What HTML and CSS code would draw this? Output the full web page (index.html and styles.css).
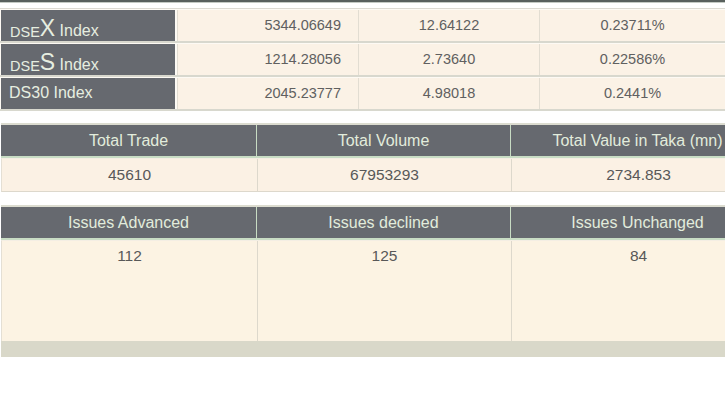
FILE: index.html
```html
<!DOCTYPE html>
<html>
<head>
<meta charset="utf-8">
<link rel="stylesheet" href="styles.css">
</head>
<body>
<div class="page">
  <div class="topbar"></div>
  <div class="idx">
    <div class="idx-row">
      <div class="idx-label"><span class="sm">DSE</span><span class="big">X</span> Index</div>
      <div class="idx-val right">5344.06649</div>
      <div class="idx-val">12.64122</div>
      <div class="idx-val">0.23711%</div>
    </div>
    <div class="idx-row">
      <div class="idx-label"><span class="sm">DSE</span><span class="big">S</span> Index</div>
      <div class="idx-val right">1214.28056</div>
      <div class="idx-val">2.73640</div>
      <div class="idx-val">0.22586%</div>
    </div>
    <div class="idx-row">
      <div class="idx-label plain">DS30 Index</div>
      <div class="idx-val right">2045.23777</div>
      <div class="idx-val">4.98018</div>
      <div class="idx-val">0.2441%</div>
    </div>
  </div>

  <div class="stat">
    <div class="stat-head">
      <div class="th">Total Trade</div>
      <div class="th">Total Volume</div>
      <div class="th">Total Value in Taka (mn)</div>
    </div>
    <div class="stat-body">
      <div class="td">45610</div>
      <div class="td">67953293</div>
      <div class="td">2734.853</div>
    </div>
  </div>

  <div class="stat issues">
    <div class="stat-head">
      <div class="th">Issues Advanced</div>
      <div class="th">Issues declined</div>
      <div class="th">Issues Unchanged</div>
    </div>
    <div class="stat-body tall">
      <div class="td">112</div>
      <div class="td">125</div>
      <div class="td">84</div>
    </div>
    <div class="stat-foot"></div>
  </div>
</div>
</body>
</html>
```

FILE: styles.css
```css
html, body {
  margin: 0;
  padding: 0;
  background: #ffffff;
  overflow: hidden;
}
.page {
  width: 725px;
  overflow: hidden;
  font-family: "Liberation Sans", Arial, sans-serif;
}
.topbar {
  height: 2px;
  background: #58605d;
  border-bottom: 1px solid #c4cac4;
  margin-bottom: 5px;
}
.idx {
  width: 725px;
  border-top: 1px solid #dcdad2;
}
.idx-row {
  display: grid;
  grid-template-columns: 176px 181px 181px 1fr;
  padding: 1px 0 0 1px;
  border-bottom: 2px solid #d8d8ce;
  background: #fdfaf4;
}
.idx-label {
  background: #66696f;
  color: #e6eee0;
  height: 31px;
  display: flex;
  align-items: flex-end;
  padding: 0 0 2px 9px;
  box-sizing: border-box;
  font-size: 16px;
  line-height: 1;
  white-space: pre;
  margin-right: 2px;
}
.idx-label .sm {
  font-size: 14.5px;
  line-height: 1;
}
.idx-label .big {
  font-size: 23px;
  line-height: 1;
  margin-bottom: -1px;
}
.idx-label.plain {
  align-items: center;
  padding: 0 0 1px 8px;
}
.idx-val {
  background: #fbf2e6;
  border-left: 1px solid #e2ddd2;
  color: #606060;
  font-size: 14.5px;
  display: flex;
  align-items: center;
  justify-content: center;
  padding-bottom: 1px;
  box-sizing: border-box;
}
.idx-val.right {
  justify-content: flex-end;
  padding-right: 17px;
}
.stat {
  width: 764px;
  margin-top: 12px;
  margin-left: 1px;
}
.issues {
  margin-top: 13px;
}
.stat-head {
  display: grid;
  grid-template-columns: 255px 254px 254px;
  background: #66696f;
  border-top: 2px solid #dcdcd0;
  border-bottom: 2px solid #c8dcc4;
}
.th {
  height: 31px;
  display: flex;
  align-items: center;
  justify-content: center;
  color: #e2ecdc;
  font-size: 16px;
  border-left: 1px solid #c8dcc4;
}
.th:first-child {
  border-left: none;
}
.stat-body {
  display: grid;
  grid-template-columns: 255px 254px 254px;
  background: #fbf1e4;
  border-top: 1px solid #f4eee4;
  border-bottom: 1px solid #ddd8cc;
  border-left: 1px solid #e4dfd4;
}
.td {
  height: 32px;
  display: flex;
  align-items: center;
  justify-content: center;
  color: #585858;
  font-size: 15.5px;
  border-left: 1px solid #ddd8cc;
}
.td:first-child {
  border-left: none;
}
.tall {
  background: #fcf3e3;
  border-bottom: none;
}
.tall .td {
  height: 100px;
  align-items: flex-start;
  padding-top: 6px;
  box-sizing: border-box;
}
.stat-foot {
  height: 16px;
  background: #d9d8c9;
}
```
